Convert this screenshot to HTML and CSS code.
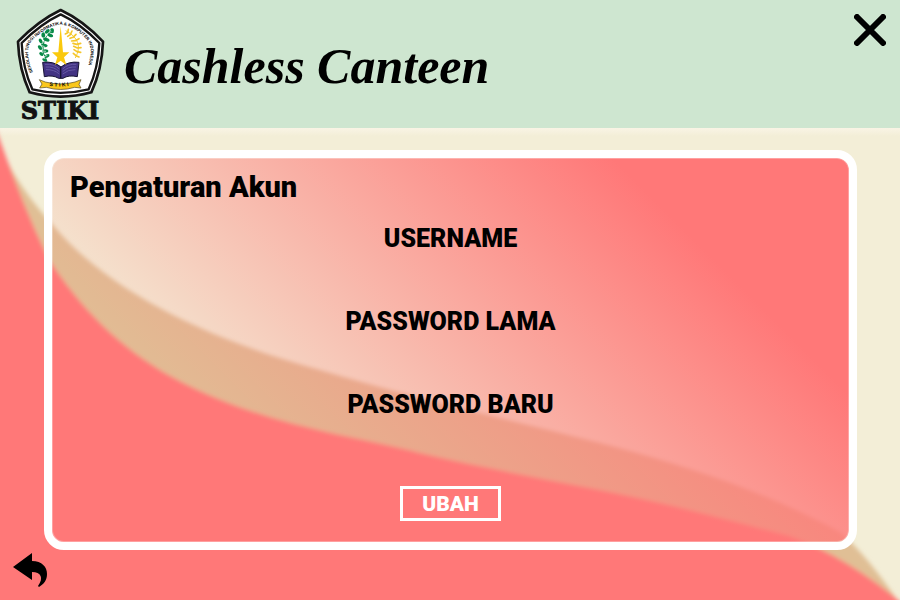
FILE: index.html
```html
<!DOCTYPE html>
<html lang="id">
<head>
<meta charset="utf-8">
<meta name="viewport" content="width=device-width, initial-scale=1">
<title>Cashless Canteen</title>
<link rel="stylesheet" href="styles.css">
</head>
<body>
<div class="page">
  <header class="header">
    <svg class="logo" viewBox="0 0 360 384" role="img" aria-label="STIKI">
      <path d="M182 30Q250 62 309 125Q306 208 274 277Q182 303 89 277Q57 208 54 125Q115 62 182 30Z" fill="#fff" stroke="#161616" stroke-width="8" stroke-linejoin="round"/>
      <path d="M182 43Q243 72 298 129Q295 204 266 268Q182 289 97 268Q68 204 65 129Q121 72 182 43Z" fill="#fff" stroke="#161616" stroke-width="7" stroke-linejoin="round"/>
      <path id="ring" d="M99 217Q82 180 85 146Q88 122 120 102Q150 77 181 74Q215 76 250 108Q271 128 272 148Q274 178 252 235" fill="none"/>
      <text class="logo-ring"><textPath href="#ring">SEKOLAH TINGGI INFORMATIKA &amp; KOMPUTER INDONESIA</textPath></text>
      <g fill="#078a47">
        <ellipse cx="156" cy="92" rx="6" ry="8"/><ellipse cx="142" cy="94" rx="9" ry="5" transform="rotate(-35 142 94)"/>
        <ellipse cx="151" cy="106" rx="9" ry="5" transform="rotate(20 151 106)"/><ellipse cx="130" cy="105" rx="6" ry="8"/>
        <ellipse cx="139" cy="119" rx="10" ry="5" transform="rotate(20 139 119)"/><ellipse cx="122" cy="123" rx="5" ry="8" transform="rotate(-30 122 123)"/>
        <ellipse cx="133" cy="136" rx="10" ry="5" transform="rotate(12 133 136)"/><ellipse cx="120" cy="143" rx="5" ry="8" transform="rotate(-40 120 143)"/>
        <ellipse cx="136" cy="153" rx="9" ry="5"/><ellipse cx="124" cy="162" rx="5" ry="7" transform="rotate(-50 124 162)"/>
        <ellipse cx="141" cy="168" rx="8" ry="5" transform="rotate(-25 141 168)"/><ellipse cx="134" cy="180" rx="8" ry="4" transform="rotate(30 134 180)"/>
      </g>
      <path d="M159 88Q108 131 141 184" fill="none" stroke="#078a47" stroke-width="3"/>
      <g fill="none" stroke="#fff" stroke-width="2"><path d="M148 88l5 7M134 101l9 5M126 118l9 7M123 136l11 4M126 153l12 1M132 170l10-4"/></g>
      <path d="M197 92Q254 122 226 174" fill="none" stroke="#f7cf35" stroke-width="3"/>
      <path d="M203 98l2-10M203 98l-7 4M211 104l5-11M211 104l-8 5M219 112l9-9M219 112l-9 3M226 122l11-6M226 122l-11 1M230 133l12-3M230 133l-11-3M232 144l11-1M232 144l-11-5M231 155l11 2M231 155l-9-6M228 167l9 4M228 167l-8-7" stroke="#f5c629" stroke-width="5" stroke-linecap="round"/>
      <path d="M128 187Q161 183 183 201Q206 183 237 187L232 230Q206 224 189 235H176Q158 224 133 230Z" fill="#423383" stroke="#161332" stroke-width="3"/>
      <path d="M135 193Q162 191 178 207M137 201Q162 199 178 215M138 209Q162 208 178 222M229 193Q204 191 188 207M228 201Q204 199 188 215M226 209Q204 208 188 222" fill="none" stroke="#6558a4" stroke-width="3"/>
      <path d="M182 200v35" stroke="#161332" stroke-width="4"/>
      <path d="M182 78L189 157H208L192 172L199 195L182 182L165 195L172 172L156 157H175Z" fill="#fac90e"/>
      <path d="M118 239L136 246Q182 258 225 246L243 239L237 253L243 264L224 262Q182 275 139 262L119 264L126 252Z" fill="#fac71c" stroke="#4d4420" stroke-width="2"/>
      <path id="ribbon" d="M148 257Q181 264 224 254" fill="none"/>
      <text class="logo-ribbon"><textPath href="#ribbon">S T I K I</textPath></text>
      <text class="logo-name" x="180" y="356" text-anchor="middle">STIKI</text>
    </svg>
    <h1 class="brand">Cashless Canteen</h1>
    <button class="icon-button close" type="button" aria-label="Tutup">
      <svg viewBox="0 0 32 32" width="32" height="32"><path d="M3 3L29 29M29 3L3 29" stroke="#000" stroke-width="6" stroke-linecap="round"/></svg>
    </button>
  </header>
  <div class="body">
    <svg class="backdrop" viewBox="0 0 900 472" preserveAspectRatio="none" aria-hidden="true">
      <defs>
        <filter id="soft" x="-5%" y="-5%" width="110%" height="110%"><feGaussianBlur stdDeviation="2"/></filter>
      </defs>
      <g filter="url(#soft)">
        <path d="M-20 30L0 20L14 46Q30 72 52 96C112 169 224 216 320 242C410 269 510 292 600 315C690 338 770 366 840 404Q866 426 900 476V500H-20Z" fill="#e0bf95"/>
        <path d="M-20 -40L0 12Q22 76 48 130C80 180 120 220 172 249C260 297 350 307 420 325C480 339 540 350 600 362C680 378 740 395 790 408Q850 430 910 482V510H-20Z" fill="#ff7878"/>
      </g>
    </svg>
    <main class="card">
      <h2 class="title">Pengaturan Akun</h2>
      <form class="form">
        <label class="label" for="username">USERNAME</label>
        <input class="field" id="username" type="text">
        <label class="label" for="old-password">PASSWORD LAMA</label>
        <input class="field" id="old-password" type="password">
        <label class="label" for="new-password">PASSWORD BARU</label>
        <input class="field" id="new-password" type="password">
        <button class="submit" type="button">UBAH</button>
      </form>
    </main>
    <footer class="footer">
      <button class="icon-button" type="button" aria-label="Kembali">
        <svg viewBox="0 0 34 34" width="34" height="34"><path d="M0 14L19 0V8C29 8 34 14 34 21C34 27 31 31 26 34L25 33C31 25 28 19 19 19V27Z" fill="#000"/></svg>
      </button>
    </footer>
  </div>
</div>
</body>
</html>
```
FILE: styles.css
```css
* {
  box-sizing: border-box;
}

body {
  margin: 0;
  font-family: Roboto, "Liberation Sans", sans-serif;
  color: #000;
}

.page {
  display: flex;
  flex-direction: column;
  min-height: 100vh;
}

.header {
  display: flex;
  align-items: flex-start;
  background: #cee6d0;
}

.logo {
  display: block;
  flex: none;
  width: 120px;
}

.logo-ring {
  font: bold 13px "Liberation Sans", sans-serif;
}

.logo-ribbon {
  font: bold 16px "Liberation Sans", sans-serif;
}

.logo-name {
  font: bold 72px "DejaVu Serif", serif;
  fill: #111;
  stroke: #111;
  stroke-width: 3px;
}

.brand {
  flex: 1;
  align-self: center;
  margin: 0;
  padding: 4px 0 0 4px;
  font: italic bold 50px/64px "Liberation Serif", serif;
}

.icon-button {
  display: block;
  padding: 0;
  border: 0;
  background: none;
  cursor: pointer;
}

.icon-button svg {
  display: block;
}

.close {
  margin: 14px;
}

.body {
  position: relative;
  display: flex;
  flex: 1;
  flex-direction: column;
  background: linear-gradient(#f9f4e5, #f3eed7 8px);
}

.backdrop {
  position: absolute;
  inset: 0;
  width: 100%;
  height: 100%;
}

.card {
  position: relative;
  flex: 1;
  margin: 22px 43px 0 44px;
  padding: 10px 18px 20px;
  border: 8px solid #fff;
  border-radius: 20px;
  background: linear-gradient(45deg, rgba(255, 120, 120, 0) 20%, #ff7878 80%) padding-box;
  box-shadow: inset 0 0 0 1px rgba(255, 255, 255, 0.3);
}

.title {
  margin: 0;
  font-size: 29px;
  font-weight: 900;
  line-height: 38px;
}

.form {
  display: flex;
  flex-direction: column;
  align-items: center;
  padding-top: 17px;
}

.label {
  font-size: 25px;
  font-weight: 900;
  line-height: 32px;
}

.field {
  width: 300px;
  max-width: 100%;
  height: 51px;
  padding: 0 12px;
  border: 0;
  background: transparent;
  font: 20px Roboto, sans-serif;
  text-align: center;
}

.submit {
  margin-top: 14px;
  padding: 1px 19px 0;
  border: 3px solid #fff;
  background: transparent;
  color: #fff;
  font: 900 21px/28px Roboto, sans-serif;
  cursor: pointer;
}

.footer {
  position: relative;
  padding: 3px 13px 13px;
}
```
